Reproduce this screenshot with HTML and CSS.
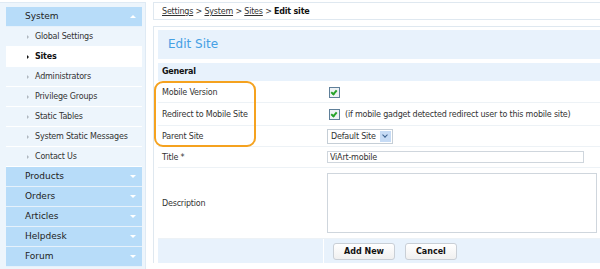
FILE: index.html
```html
<!DOCTYPE html>
<html lang="en">
<head>
    <meta charset="UTF-8">
    <title>Edit site</title>
    <link rel="stylesheet" href="styles.css">
</head>
<body>

<div class="sidebar">
    <div class="menu-head open">System <span class="arrow up"></span></div>
    <ul class="submenu">
        <li>Global Settings</li>
        <li class="active">Sites</li>
        <li>Administrators</li>
        <li>Privilege Groups</li>
        <li>Static Tables</li>
        <li>System Static Messages</li>
        <li>Contact Us</li>
    </ul>
    <div class="menu-head">Products <span class="arrow"></span></div>
    <div class="menu-head">Orders <span class="arrow"></span></div>
    <div class="menu-head">Articles <span class="arrow"></span></div>
    <div class="menu-head">Helpdesk <span class="arrow"></span></div>
    <div class="menu-head">Forum <span class="arrow"></span></div>
</div>

<div class="main">
    <div class="breadcrumb">
        <a href="#">Settings</a> &gt; <a href="#">System</a> &gt; <a href="#">Sites</a> &gt; <b>Edit site</b>
    </div>

    <div class="panel">
        <h2>Edit Site</h2>
        <div class="section">General</div>
        <div class="highlight-rows">
            <div class="row">
                <div class="label">Mobile Version</div>
                <div class="value"><span class="check"></span></div>
            </div>
            <div class="row redirect">
                <div class="label">Redirect to Mobile Site</div>
                <div class="value"><span class="check"></span> (if mobile gadget detected redirect user to this mobile site)</div>
            </div>
            <div class="row">
                <div class="label">Parent Site</div>
                <div class="value">
                    <span class="select">Default Site <span class="select-btn"></span></span>
                </div>
            </div>
            <div class="circle"></div>
        </div>
        <div class="row">
            <div class="label">Title *</div>
            <div class="value"><input type="text" class="title-input" value="ViArt-mobile"></div>
        </div>
        <div class="row tall">
            <div class="label">Description</div>
            <div class="value"><textarea></textarea></div>
        </div>
        <div class="row buttons">
            <div class="label"></div>
            <div class="value">
                <button>Add New</button>
                <button>Cancel</button>
            </div>
        </div>
    </div>
</div>

</body>
</html>
```

FILE: styles.css
```css
body {
    margin: 0;
    font-family: "DejaVu Sans", Verdana, sans-serif;
    font-size: 8px;
    letter-spacing: -0.2px;
    color: #333;
    background-color: white;
    display: flex;
    height: 269px;
    overflow: hidden;
}
.sidebar {
    width: 136px;
    margin-top: 2px;
    padding: 4px 3px 0 6px;
    background-color: #edf5fc;
    border-top: 1px solid #dfeaf4;
    border-right: 1px solid #dfeaf4;
}
.menu-head {
    height: 19px;
    line-height: 19px;
    padding-left: 19px;
    background-color: #b7dcf9;
    color: #222;
    font-size: 9px;
    letter-spacing: 0;
    border-bottom: 1px solid #e6f1fb;
    position: relative;
}
.arrow {
    position: absolute;
    right: 6px;
    top: 8px;
    width: 0;
    height: 0;
    border-left: 3px solid transparent;
    border-right: 3px solid transparent;
    border-top: 3px solid white;
}
.arrow.up {
    border-top: none;
    border-bottom: 3px solid white;
}
.submenu {
    list-style: none;
    margin: 0;
    padding: 0;
}
.submenu li {
    height: 19px;
    line-height: 19px;
    padding-left: 29px;
    border-bottom: 1px solid #ffffff;
    background-color: #edf5fc;
    position: relative;
    color: #333;
}
.submenu li:before {
    content: "";
    position: absolute;
    left: 21px;
    top: 8px;
    border-top: 2px solid transparent;
    border-bottom: 2px solid transparent;
    border-left: 2px solid #b0b8c0;
}
.submenu li.active {
    background-color: white;
    font-weight: bold;
    color: #111;
}
.submenu li.active:before {
    border-left-color: #111;
}
.main {
    flex: 1;
    margin-left: 7px;
    padding-top: 2px;
}
.breadcrumb {
    height: 16px;
    line-height: 18px;
    padding-left: 8px;
    border: 1px solid #dfe8f0;
    border-right: none;
    color: #333;
}
.breadcrumb a {
    color: #333;
}
.breadcrumb b {
    color: #111;
}
.panel {
    margin-top: 6px;
    border-top: 1px solid #dfe8f0;
    border-left: 1px solid #dfe8f0;
    padding: 3px 0 0 4px;
}
h2 {
    margin: 0;
    height: 29px;
    line-height: 29px;
    padding-left: 10px;
    background-color: #e8f2fc;
    color: #45a0e4;
    font-weight: normal;
    font-size: 12px;
    letter-spacing: 0;
}
.section {
    margin-top: 4px;
    margin-bottom: 1px;
    height: 18px;
    line-height: 18px;
    padding-left: 4px;
    background-color: #e8f2fc;
    font-weight: bold;
    color: #111;
}
.highlight-rows {
    position: relative;
}
.circle {
    position: absolute;
    left: -4px;
    top: -1px;
    width: 98px;
    height: 62px;
    border: 2px solid #f5a21f;
    border-radius: 9px;
}
.row {
    display: flex;
    min-height: 20px;
    border-bottom: 1px solid #edf2f6;
}
.row.redirect {
    min-height: 22px;
}
.label {
    width: 161px;
    padding-left: 4px;
    display: flex;
    align-items: center;
}
.value {
    flex: 1;
    display: flex;
    align-items: center;
    padding-left: 4px;
}
.check {
    display: inline-block;
    width: 9px;
    height: 9px;
    border: 1px solid #5f7f99;
    background: #eef2f5;
    margin-left: 2px;
    margin-right: 5px;
    position: relative;
}
.check:after {
    content: "";
    position: absolute;
    left: 2px;
    top: 1px;
    width: 2px;
    height: 4px;
    border-right: 2px solid #27a32a;
    border-bottom: 2px solid #27a32a;
    transform: rotate(40deg);
}
.select {
    display: inline-flex;
    align-items: center;
    height: 13px;
    padding-left: 3px;
    border: 1px solid #c5ced6;
    background: white;
}
.select-btn {
    display: inline-block;
    width: 11px;
    height: 11px;
    margin-left: 4px;
    margin-right: 1px;
    background: #c6dbf5;
    position: relative;
}
.select-btn:after {
    content: "";
    position: absolute;
    left: 3px;
    top: 2px;
    width: 3px;
    height: 3px;
    border-right: 1px solid #3a5f8c;
    border-bottom: 1px solid #3a5f8c;
    transform: rotate(45deg);
}
.title-input {
    width: 251px;
    height: 10px;
    padding: 0 2px;
    border: 1px solid #cfd6dd;
    font-family: inherit;
    font-size: 8px;
    letter-spacing: -0.2px;
    color: #333;
}
.row.tall {
    min-height: 70px;
}
textarea {
    width: 264px;
    height: 54px;
    border: 1px solid #cfd6dd;
    resize: none;
}
.row.buttons {
    background-color: #e8f2fc;
    min-height: 24px;
    border-bottom: none;
}
.row.buttons .label {
    border-right: 1px solid white;
}
button {
    height: 17px;
    padding: 0 10px;
    margin: 0 5px 0 5px;
    font-family: inherit;
    font-size: 8px;
    font-weight: bold;
    color: #111;
    background: linear-gradient(#ffffff, #f0f0f0);
    border: 1px solid #c9cfd6;
    border-radius: 3px;
}
```
